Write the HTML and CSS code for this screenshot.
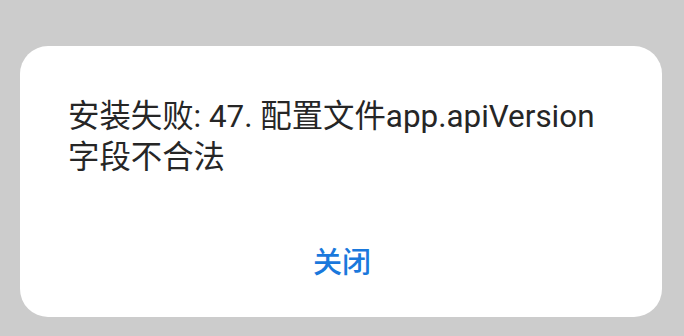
FILE: index.html
```html
<!DOCTYPE html>
<html lang="zh-CN">
<head>
<meta charset="utf-8">
<link rel="stylesheet" href="styles.css">
</head>
<body>
<div class="screen">
  <div class="dialog">
    <p class="message">安装失败: 47. 配置文件app.apiVersion字段不合法</p>
    <div class="actions">
      <button class="btn">关闭</button>
    </div>
  </div>
</div>
</body>
</html>
```
FILE: styles.css
```css
html, body {
  margin: 0;
  padding: 0;
  background: #cccccc;
}
.screen {
  width: 684px;
  height: 336px;
  box-sizing: border-box;
  padding: 46px 22px 19px 20px;
  display: flex;
}
.dialog {
  flex: 1;
  background: #ffffff;
  border-radius: 28px;
  padding: 50px 46px 0 48px;
  display: flex;
  flex-direction: column;
}
.message {
  margin: 0;
  font-family: Roboto, "Noto Sans CJK SC", sans-serif;
  font-size: 31.4px;
  line-height: 41px;
  color: #262626;
  word-break: break-all;
}
.actions {
  display: flex;
  justify-content: center;
  margin-top: 62px;
}
.btn {
  border: none;
  background: none;
  padding: 0;
  font-family: "Noto Sans CJK SC", sans-serif;
  font-size: 29px;
  font-weight: 500;
  line-height: 40px;
  color: #1a78dc;
}
```
